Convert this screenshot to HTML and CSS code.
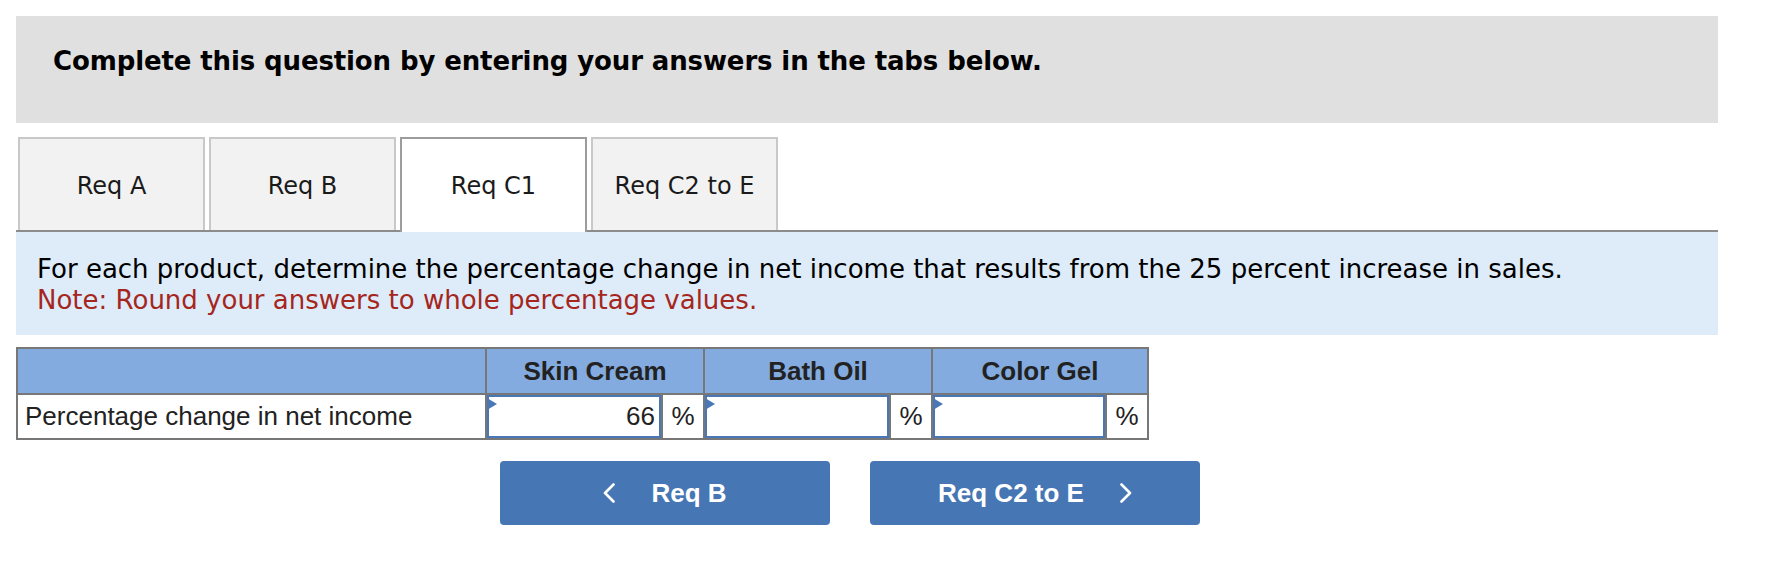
FILE: index.html
```html
<!DOCTYPE html>
<html lang="en">
<head>
<meta charset="utf-8">
<title>Req C1</title>
<link rel="stylesheet" href="styles.css">
</head>
<body>
<div class="page">
  <div class="prompt">Complete this question by entering your answers in the tabs below.</div>

  <div class="tabs">
    <div class="tab">Req A</div>
    <div class="tab">Req B</div>
    <div class="tab active">Req C1</div>
    <div class="tab">Req C2 to E</div>
  </div>

  <div class="instructions">
    <p class="line">For each product, determine the percentage change in net income that results from the 25 percent increase in sales.</p>
    <p class="line note">Note: Round your answers to whole percentage values.</p>
  </div>

  <div class="grid">
    <div class="hcell"></div>
    <div class="hcell span2">Skin Cream</div>
    <div class="hcell span2">Bath Oil</div>
    <div class="hcell span2">Color Gel</div>

    <div class="label">Percentage change in net income</div>
    <div class="inputcell"><span class="flag"></span><div class="input">66</div></div>
    <div class="pct">%</div>
    <div class="inputcell"><span class="flag"></span><div class="input"></div></div>
    <div class="pct">%</div>
    <div class="inputcell"><span class="flag"></span><div class="input"></div></div>
    <div class="pct">%</div>
  </div>

  <div class="nav">
    <button class="btn" type="button">
      <svg class="chev" width="12" height="20" viewBox="0 0 12 20"><polyline points="10.5,1.5 2,10 10.5,18.5" fill="none" stroke="#fff" stroke-width="2.6" stroke-linecap="round" stroke-linejoin="round"/></svg>
      <span>Req B</span>
    </button>
    <button class="btn" type="button">
      <span>Req C2 to E</span>
      <svg class="chev" width="12" height="20" viewBox="0 0 12 20"><polyline points="1.5,1.5 10,10 1.5,18.5" fill="none" stroke="#fff" stroke-width="2.6" stroke-linecap="round" stroke-linejoin="round"/></svg>
    </button>
  </div>
</div>
</body>
</html>
```

FILE: styles.css
```css
* { box-sizing: border-box; }

html, body {
  margin: 0;
  padding: 0;
  background: #ffffff;
}

.page {
  padding: 16px 0 0 16px;
  width: 1718px;
  font-family: "DejaVu Sans", Verdana, sans-serif;
  color: #000;
}

.prompt {
  width: 1702px;
  background: #e0e0e0;
  padding: 30px 37px 46px;
  font-weight: bold;
  font-size: 26px;
  line-height: 31px;
  letter-spacing: -0.12px;
  color: #000;
}

.tabs {
  display: flex;
  align-items: flex-end;
  gap: 4px;
  margin-top: 14px;
  padding-left: 2px;
}

.tab {
  width: 187px;
  height: 93px;
  background: #f2f2f2;
  border: 2px solid #c8c8c8;
  border-bottom: 0;
  display: flex;
  align-items: center;
  justify-content: center;
  padding-top: 3px;
  font-size: 24px;
  color: #1a1a1a;
}

.tab.active {
  background: #ffffff;
  border-color: #9c9c9c;
  height: 95px;
  margin-bottom: -2px;
  padding-bottom: 2px;
  position: relative;
  z-index: 1;
}

.instructions {
  width: 1702px;
  background: #deebf8;
  border-top: 2px solid #8c8c8c;
  padding: 22px 21px 19px;
  font-size: 26px;
  line-height: 31px;
}

.line {
  margin: 0;
  color: #000;
}

.note {
  color: #a5261d;
}

.grid {
  display: grid;
  width: max-content;
  grid-template-columns: 467px 174px 40px 184px 40px 172px 40px;
  grid-template-rows: 44px 43px;
  gap: 2px;
  padding: 2px;
  background: #777777;
  margin-top: 12px;
  font-family: "Liberation Sans", Arial, sans-serif;
  font-size: 26px;
  color: #222;
}

.hcell {
  background: #83abdf;
  font-weight: bold;
  display: flex;
  align-items: center;
  justify-content: center;
  color: #222;
}

.span2 {
  grid-column: span 2;
}

.label {
  background: #fff;
  display: flex;
  align-items: center;
  padding-left: 7px;
}

.inputcell {
  background: #fff;
  position: relative;
  display: flex;
}

.input {
  flex: 1;
  border: 2px solid #4a78b6;
  display: flex;
  align-items: center;
  justify-content: flex-end;
  padding-right: 4px;
}

.flag {
  position: absolute;
  left: 0;
  top: 3px;
  width: 0;
  height: 0;
  border-left: 10px solid #4a78b6;
  border-top: 6px solid transparent;
  border-bottom: 6px solid transparent;
}

.pct {
  background: #fff;
  display: flex;
  align-items: center;
  justify-content: center;
}

.nav {
  display: flex;
  gap: 40px;
  margin-top: 21px;
  margin-left: 484px;
}

.btn {
  width: 330px;
  height: 64px;
  border: 0;
  border-radius: 4px;
  background: #4676b4;
  color: #fff;
  font-family: "Liberation Sans", Arial, sans-serif;
  font-weight: bold;
  font-size: 26px;
  display: flex;
  align-items: center;
  justify-content: center;
  gap: 36px;
  padding: 0;
}

.chev {
  display: block;
}
```
